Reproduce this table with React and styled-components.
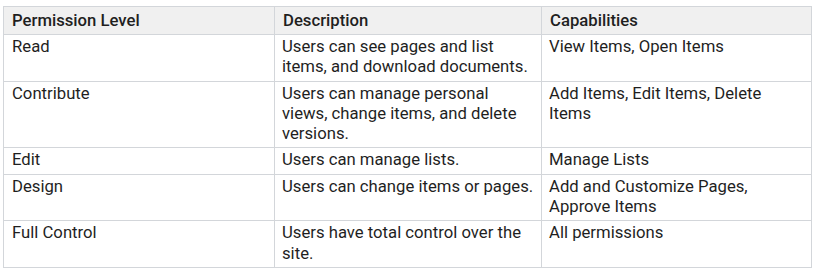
import styled, { createGlobalStyle } from "styled-components";

const GlobalStyle = createGlobalStyle`
  body {
    margin: 0;
    background: #ffffff;
    font-family: Roboto, "Noto Sans", Arial, sans-serif;
  }
`;

const Wrapper = styled.div`
  padding: 6px 4px 0 3px;
`;

const Table = styled.table`
  width: 808px;
  border-collapse: collapse;
  table-layout: fixed;
  font-size: 16.7px;
  line-height: 20.3px;
  color: #1f1f1f;
`;

const HeadCell = styled.th`
  text-align: left;
  font-weight: 500;
  line-height: 20px;
  background: #f0f0f0;
  border: 1px solid #d3d6da;
  padding: 4px 7px 3px 8px;
  vertical-align: top;
`;

const Cell = styled.td`
  border: 1px solid #d3d6da;
  padding: 2px 7px 3px 7px;
  vertical-align: top;

  &:first-child {
    padding-left: 8px;
  }
`;

const rows = [
  ["Read", "Users can see pages and list items, and download documents.", "View Items, Open Items"],
  ["Contribute", "Users can manage personal views, change items, and delete versions.", "Add Items, Edit Items, Delete Items"],
  ["Edit", "Users can manage lists.", "Manage Lists"],
  ["Design", "Users can change items or pages.", "Add and Customize Pages, Approve Items"],
  ["Full Control", "Users have total control over the site.", "All permissions"],
];

const App = () => (
  <Wrapper>
    <GlobalStyle />
    <Table>
      <colgroup>
        <col style={{ width: 271 }} />
        <col style={{ width: 267 }} />
        <col style={{ width: 270 }} />
      </colgroup>
      <thead>
        <tr>
          <HeadCell>Permission Level</HeadCell>
          <HeadCell>Description</HeadCell>
          <HeadCell>Capabilities</HeadCell>
        </tr>
      </thead>
      <tbody>
        {rows.map(([level, desc, caps]) => (
          <tr key={level}>
            <Cell>{level}</Cell>
            <Cell>{desc}</Cell>
            <Cell>{caps}</Cell>
          </tr>
        ))}
      </tbody>
    </Table>
  </Wrapper>
);

export default App;
